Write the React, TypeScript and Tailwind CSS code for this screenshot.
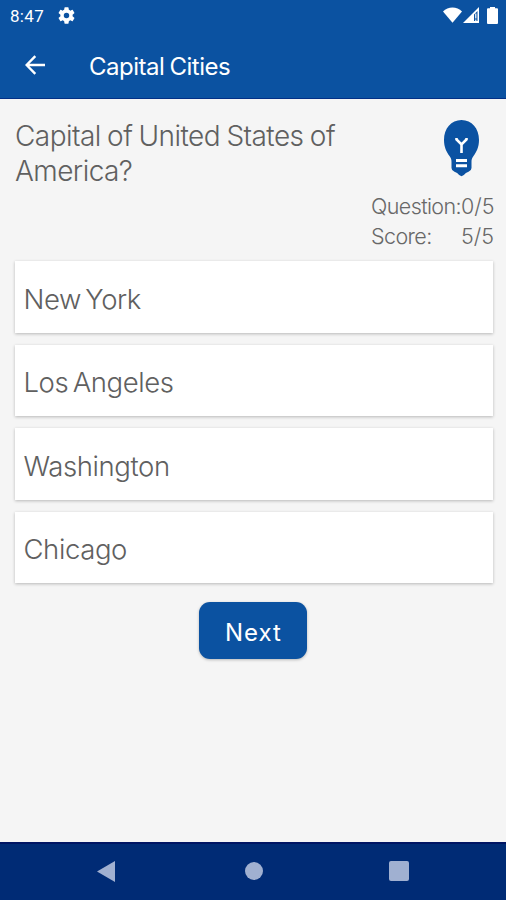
import { useState } from 'react';

const options = ['New York', 'Los Angeles', 'Washington', 'Chicago'];

function StatusBar() {
  return (
    <div className="flex h-8 items-center justify-between pl-[10px] pr-2 text-white">
      <div className="flex items-center gap-[14px]">
        <span className="font-[Roboto] text-[17px] leading-8 tracking-[0.3px]">8:47</span>
        <svg viewBox="2 2 20 20" className="mb-px h-[17px] w-[17px]" fill="currentColor">
          <path d="M19.14 12.94c.04-.3.06-.61.06-.94s-.02-.64-.07-.94l2.03-1.58a.49.49 0 0 0 .12-.61l-1.92-3.32a.49.49 0 0 0-.59-.22l-2.39.96a7 7 0 0 0-1.62-.94l-.36-2.54a.48.48 0 0 0-.48-.41h-3.84a.48.48 0 0 0-.47.41l-.36 2.54c-.59.24-1.13.57-1.62.94l-2.39-.96a.48.48 0 0 0-.59.22L2.74 8.87a.48.48 0 0 0 .12.61l2.03 1.58a6 6 0 0 0 0 1.88l-2.03 1.58a.49.49 0 0 0-.12.61l1.92 3.32c.12.22.37.29.59.22l2.39-.96c.5.38 1.03.7 1.62.94l.36 2.54c.05.24.24.41.48.41h3.84c.24 0 .44-.17.47-.41l.36-2.54a7 7 0 0 0 1.62-.94l2.39.96c.22.08.47 0 .59-.22l1.92-3.32a.48.48 0 0 0-.12-.61zM12 15.2a3.2 3.2 0 1 1 0-6.4 3.2 3.2 0 0 1 0 6.4z" />
        </svg>
      </div>
      <div className="flex items-center pb-0.5">
        <svg viewBox="0 0 19 16" className="h-4 w-[19px]" fill="currentColor">
          <path d="M0 4.500C5-.7 14-.7 19 4.500L9.500 15.800z" />
        </svg>
        <svg viewBox="0 0 16 16" className="ml-px h-4 w-4" fill="currentColor">
          <path fillRule="evenodd" d="M0 16L16 0v16zM11 7.500V14h3.500V4z" />
          <path d="M12.200 6.500h1.200v5h-1.200zM12.200 12.500h1.200v1.500h-1.200z" />
        </svg>
        <svg viewBox="0 0 11 17" className="ml-2 h-[17px] w-[11px]" fill="currentColor">
          <path d="M3 0h5v1.300h2a1 1 0 0 1 1 1V16a1 1 0 0 1-1 1H1a1 1 0 0 1-1-1V2.300a1 1 0 0 1 1-1h2z" />
        </svg>
      </div>
    </div>
  );
}

function BulbIcon() {
  return (
    <svg viewBox="0 0 36 58" className="h-[58px] w-9">
      <path
        d="M18.500 0C8.200 0 1 8.500 1 20c0 7 2.500 12 5.500 16 1.500 2 2 3.500 2 6v6q0 2.500 3 3.800l2.600 1.300Q16 55.500 18.500 56.300q2.500-.8 4.400-3.200l2.600-1.300q3-1.300 3-3.800v-6c0-2.500.5-4 2-6 3-4 5.500-9 5.500-16C36 8.500 28.800 0 18.500 0z"
        fill="#0b52a2"
      />
      <path d="M13.500 18v1.500l5 5 5-5V18M18.500 24v9" fill="none" stroke="white" strokeWidth="2.600" />
      <path d="M13 40.500h11M13 45.800h11" stroke="white" strokeWidth="2.900" />
    </svg>
  );
}

export default function App() {
  const [, setSelected] = useState('');

  return (
    <div className="flex h-[900px] w-[506px] flex-col bg-[#f5f5f5] font-[Inter,sans-serif] text-[#606060]">
      {/* App bar */}
      <header className="h-[99px] shrink-0 border-b border-[#033086] bg-[#0b52a1]">
        <StatusBar />
        <div className="flex h-[66px] items-center pl-[25px] text-white">
          <svg viewBox="0 0 20 20" className="h-5 w-5" fill="none" stroke="currentColor" strokeWidth="2.400">
            <path d="M20 10H2M10.300 1.200L1.600 10l8.700 8.800" />
          </svg>
          <h1 className="ml-11 whitespace-nowrap pt-[3px] text-[24px] tracking-[-0.5px] [word-spacing:-1px]">
            Capital Cities
          </h1>
        </div>
      </header>

      <main className="flex flex-1 flex-col px-[15px] pt-5">
        {/* Question and hint */}
        <div className="flex items-start justify-between">
          <h2 className="whitespace-nowrap text-[28px] font-light leading-[35px] tracking-[-0.55px] [word-spacing:-1px]">
            Capital of United States of
            <br />
            America?
          </h2>
          <button className="mr-3 mt-px">
            <BulbIcon />
          </button>
        </div>

        {/* Progress */}
        <div className="mt-0.5 ml-auto mr-[-3px] w-[123px] whitespace-nowrap text-[21.500px] font-light leading-[30px] tracking-[-0.6px] text-[#686868]">
          <div className="flex justify-between">
            <span>Question:</span>
            <span className="tracking-[0px]">0/5</span>
          </div>
          <div className="flex justify-between">
            <span>Score:</span>
            <span className="tracking-[0px]">5/5</span>
          </div>
        </div>

        {/* Answers */}
        <div className="mt-2.5 flex flex-col gap-3">
          {options.map((option) => (
            <button
              key={option}
              onClick={() => setSelected(option)}
              className="h-[71.500px] w-[478px] bg-white pl-[8.500px] pt-[5px] text-left text-[27.500px] font-light tracking-[-0.4px] shadow-[0_1px_3px_rgba(0,0,0,0.25)] [word-spacing:-3px]"
            >
              {option}
            </button>
          ))}
        </div>

        <button className="mx-auto mt-[19px] h-[57px] w-[108px] rounded-[11px] bg-[#0b52a1] pt-[5px] pl-px text-[24px] tracking-[1px] text-white shadow-[0_1px_3px_rgba(0,0,0,0.25)]">
          Next
        </button>
      </main>

      {/* System navigation */}
      <nav className="flex h-[58px] shrink-0 items-center justify-between border-t-2 border-[#001563] bg-[#002b75] px-[97px] pb-0.5 text-[#a0b0d1]">
        <svg viewBox="0 0 18 21" className="h-[21px] w-[18px]" fill="currentColor">
          <path d="M18 0v21L0 10.500z" />
        </svg>
        <span className="ml-[3px] h-[18px] w-[18px] rounded-full bg-[#a0b0d1]" />
        <span className="h-5 w-5 rounded-xs bg-[#a0b0d1]" />
      </nav>
    </div>
  );
}
